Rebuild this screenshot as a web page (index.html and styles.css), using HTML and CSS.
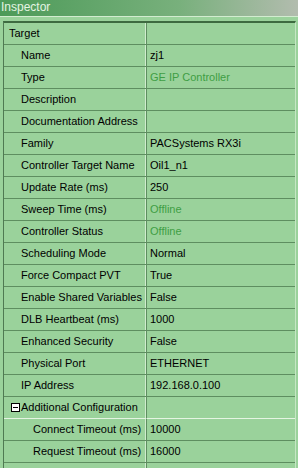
FILE: index.html
```html
<!DOCTYPE html>
<html lang="en">

<head>
    <meta charset="UTF-8">
    <title>Inspector</title>
    <link rel="stylesheet" href="styles.css">
</head>

<body>
    <div class="titlebar">Inspector</div>
    <div class="band"></div>
    <div class="grid">
        <div class="row"><div class="name lvl0">Target</div><div class="value"></div></div>
        <div class="row"><div class="name lvl1">Name</div><div class="value">zj1</div></div>
        <div class="row"><div class="name lvl1">Type</div><div class="value ro">GE IP Controller</div></div>
        <div class="row"><div class="name lvl1">Description</div><div class="value"></div></div>
        <div class="row"><div class="name lvl1">Documentation Address</div><div class="value"></div></div>
        <div class="row"><div class="name lvl1">Family</div><div class="value">PACSystems RX3i</div></div>
        <div class="row"><div class="name lvl1">Controller Target Name</div><div class="value">Oil1_n1</div></div>
        <div class="row"><div class="name lvl1">Update Rate (ms)</div><div class="value">250</div></div>
        <div class="row"><div class="name lvl1">Sweep Time (ms)</div><div class="value ro">Offline</div></div>
        <div class="row"><div class="name lvl1">Controller Status</div><div class="value ro">Offline</div></div>
        <div class="row"><div class="name lvl1">Scheduling Mode</div><div class="value">Normal</div></div>
        <div class="row"><div class="name lvl1">Force Compact PVT</div><div class="value">True</div></div>
        <div class="row"><div class="name lvl1">Enable Shared Variables</div><div class="value">False</div></div>
        <div class="row"><div class="name lvl1">DLB Heartbeat (ms)</div><div class="value">1000</div></div>
        <div class="row"><div class="name lvl1">Enhanced Security</div><div class="value">False</div></div>
        <div class="row"><div class="name lvl1">Physical Port</div><div class="value">ETHERNET</div></div>
        <div class="row"><div class="name lvl1">IP Address</div><div class="value">192.168.0.100</div></div>
        <div class="row group">
            <div class="name lvl1g"><span class="toggle"></span>Additional Configuration</div>
            <div class="value"></div>
        </div>
        <div class="row"><div class="name lvl2">Connect Timeout (ms)</div><div class="value">10000</div></div>
        <div class="row"><div class="name lvl2">Request Timeout (ms)</div><div class="value">16000</div></div>
        <div class="row"><div class="name lvl2"></div><div class="value"></div></div>
    </div>
</body>

</html>
```

FILE: styles.css
```css
html, body {
    margin: 0;
    padding: 0;
}

body {
    width: 298px;
    height: 468px;
    overflow: hidden;
    background: #9ad29b;
    font-family: Tahoma, "Liberation Sans", Arial, sans-serif;
    font-size: 11px;
    color: #000;
}

.titlebar {
    height: 16px;
    line-height: 15px;
    padding-left: 1px;
    font-size: 12px;
    color: #e4f4e2;
    background: linear-gradient(to right, #4c9a58, #78b07c 60%, #b2bcae);
}

.band {
    height: 4px;
    border-top: 1px solid #d2ecd0;
    background: #9ad29b;
}

.grid {
    margin-left: 3px;
    width: 291px;
    border-left: 1px solid #4f7a52;
    border-top: 2px solid #3d6a40;
    border-right: 1px solid #c6e6c4;
}

.row {
    display: grid;
    grid-template-columns: 143px 1fr;
    height: 22px;
}

.name {
    border-bottom: 1px solid #5e8e60;
    border-right: 1px solid #5e8e60;
    box-shadow: inset -1px 0 0 #d0ecce;
    line-height: 21px;
    white-space: nowrap;
    overflow: hidden;
}

.value {
    border-bottom: 1px solid #5e8e60;
    line-height: 21px;
    padding-left: 3px;
    white-space: nowrap;
    overflow: hidden;
}

.ro {
    color: #3f9e44;
}

.lvl0 { padding-left: 5px; }
.lvl1 { padding-left: 17px; }
.lvl1g { padding-left: 7px; }
.lvl2 { padding-left: 29px; }

.group .name,
.group .value {
    border-bottom-color: #e4f4e2;
}

.toggle {
    display: inline-block;
    position: relative;
    width: 7px;
    height: 7px;
    border: 1px solid #000;
    background: #fff;
    margin-right: 1px;
    vertical-align: -1px;
}

.toggle::after {
    content: "";
    position: absolute;
    left: 1px;
    top: 3px;
    width: 5px;
    height: 1px;
    background: #000;
}
```
